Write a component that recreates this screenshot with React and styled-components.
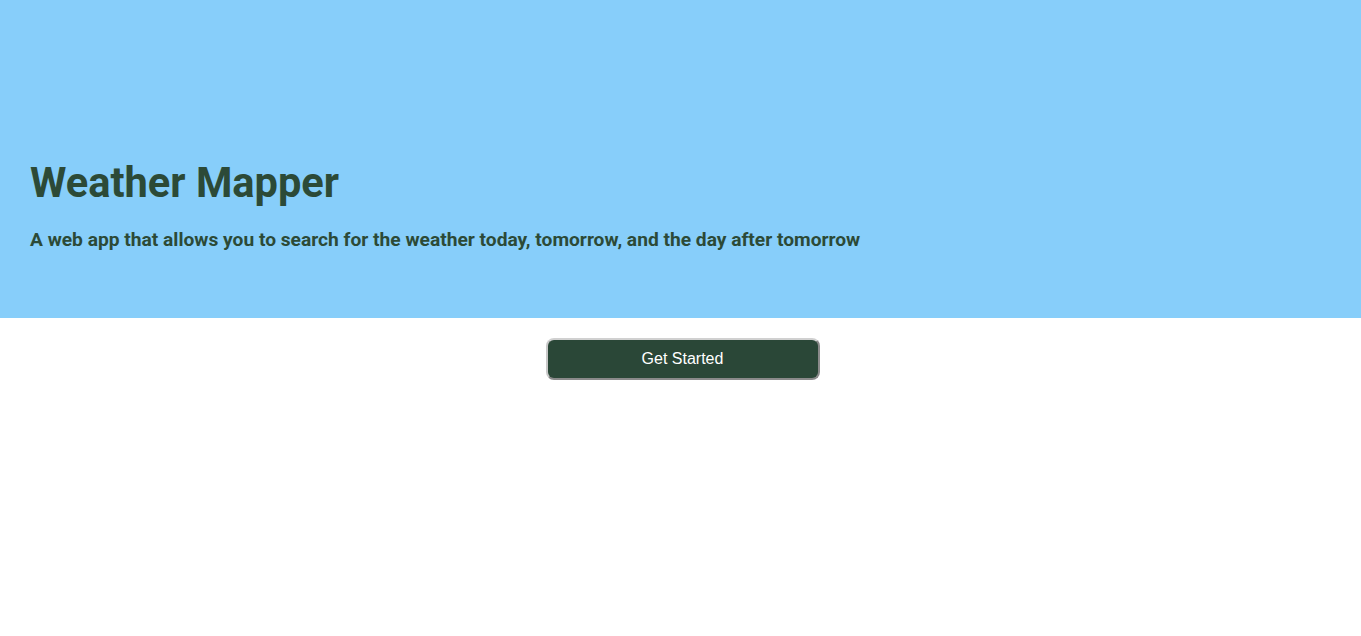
import React from 'react';
import styled, { createGlobalStyle } from 'styled-components';

const GlobalStyle = createGlobalStyle`
    body {
        margin: 0;
        font-family: Roboto, "Liberation Sans", sans-serif;
        background: #fff;
    }
`

const Hero = styled.header`
    background: #87cefa;
    height: 318px;
    box-sizing: border-box;
    padding: 158px 30px 0;
    color: #2c4a37;
`

const Title = styled.h1`
    font-size: 41.6px;
    font-weight: 700;
    margin: 0 0 21px;
    line-height: 50px;
`

const Tagline = styled.p`
    font-size: 19.2px;
    font-weight: 700;
    margin: 0;
    line-height: 22px;
`

const Actions = styled.div`
    display: flex;
    justify-content: center;
    padding: 20px 0 0 4px;
`

const StartButton = styled.button`
    width: 274px;
    height: 42px;
    background: #2a4737;
    color: #fff;
    font-family: Arial, "Liberation Sans", sans-serif;
    font-size: 16px;
    border: 2px solid #8a8a8a;
    border-top-color: #d0d0d0;
    border-left-color: #c8c8c8;
    border-radius: 8px;
    cursor: pointer;
`

export default function App() {
    return (
        <>
            <GlobalStyle />
            <Hero>
                <Title>Weather Mapper</Title>
                <Tagline>A web app that allows you to search for the weather today, tomorrow, and the day after tomorrow</Tagline>
            </Hero>
            <Actions>
                <StartButton>Get Started</StartButton>
            </Actions>
        </>
    );
}
